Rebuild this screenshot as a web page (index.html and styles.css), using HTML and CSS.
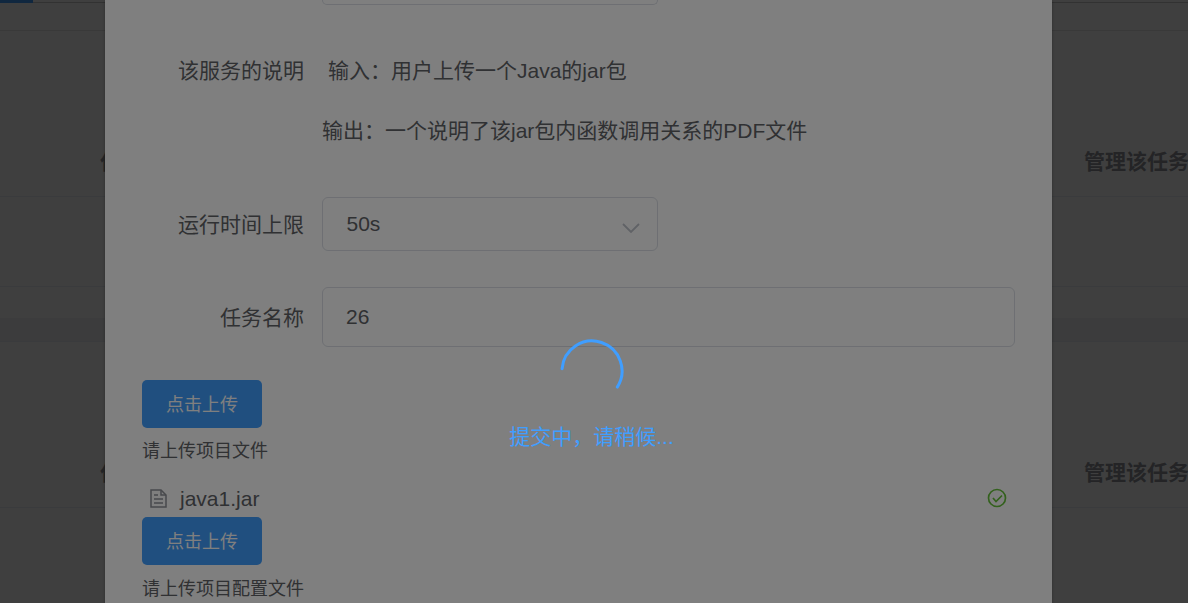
FILE: index.html
```html
<!DOCTYPE html>
<html lang="zh-CN">
<head>
<meta charset="utf-8">
<title>提交任务</title>
<link rel="stylesheet" href="styles.css">
</head>
<body>
<div class="page">
  <div class="topbar"><div class="progress"></div></div>
  <div class="head-row"><span class="head-cell">任务名称</span><span class="head-cell">管理该任务</span></div>
  <div class="body-row"></div>
  <div class="gap"></div>
  <div class="head-row"><span class="head-cell">任务名称</span><span class="head-cell">管理该任务</span></div>
</div>
<div class="modal-mask"></div>
<div class="dialog">
  <div class="stub"></div>
  <div class="form-row desc-row">
    <div class="label">该服务的说明</div>
    <div class="desc">
      <div class="desc-first">输入：用户上传一个Java的jar包</div>
      <div>输出：一个说明了该jar包内函数调用关系的PDF文件</div>
    </div>
  </div>
  <div class="form-row select-row">
    <div class="label">运行时间上限</div>
    <div class="field select">
      <span>50s</span>
      <svg class="arrow" width="18" height="10" viewBox="0 0 18 10"><path d="M1 1l8 8 8-8"/></svg>
    </div>
  </div>
  <div class="form-row input-row">
    <div class="label">任务名称</div>
    <div class="field input"><span>26</span></div>
  </div>
  <div class="btn btn-first">点击上传</div>
  <div class="tip tip-first">请上传项目文件</div>
  <div class="file">
    <svg class="doc" width="17" height="19" viewBox="0 0 17 19"><path d="M1 1h10l5 5v12H1z"/><path d="M11 1v5h5M4 6h4M4 10h9M4 14h9"/></svg>
    <span class="file-name">java1.jar</span>
    <svg class="ok" width="20" height="20" viewBox="0 0 20 20"><circle cx="10" cy="10" r="8.5"/><path d="M6 10l3 3.500 6-6"/></svg>
  </div>
  <div class="btn">点击上传</div>
  <div class="tip tip-second">请上传项目配置文件</div>
</div>
<div class="loading">
  <svg class="spinner" width="66" height="66" viewBox="0 0 66 66"><path d="M3.100 30.700A30 30 0 1 1 58.300 49.100"/></svg>
  <div class="loading-text">提交中，请稍候...</div>
</div>
</body>
</html>
```
FILE: styles.css
```css
* { box-sizing: border-box; }
html, body { margin: 0; height: 100%; }
body {
  position: relative;
  width: 1188px;
  height: 603px;
  overflow: hidden;
  background: #fff;
  font-family: "Liberation Sans", "Noto Sans CJK SC", sans-serif;
  color: #606266;
}
.page { height: 603px; overflow: hidden; }
.topbar {
  height: 31px;
  border-bottom: 1px solid #e6e6e6;
  background: linear-gradient(#fff 2px, #c8c8c8 2px, #c8c8c8 3px, #fff 3px);
}
.topbar .progress { width: 33px; height: 3px; background: #409eff; }
.head-row {
  display: grid;
  grid-template-columns: 984px 1fr;
  align-items: center;
  height: 166px;
  padding: 93px 0 0 100px;
  border-bottom: 1px solid #ebeef5;
  font-size: 21px;
  font-weight: 700;
  color: #909399;
  white-space: nowrap;
}
.body-row { height: 90px; border-bottom: 1px solid #ebeef5; }
.gap { height: 24px; margin-top: 31px; background: #f0f2f5; border-bottom: 1px solid #ebeef5; }
.modal-mask, .loading { position: absolute; inset: 0; background: rgba(0, 0, 0, .5); }
.dialog {
  position: absolute;
  top: 0;
  left: 105px;
  width: 947px;
  height: 603px;
  overflow: hidden;
  padding: 0 37px;
  background: #fff;
  box-shadow: 0 1px 3px rgba(0, 0, 0, .3);
}
.stub {
  width: 336px;
  height: 5px;
  margin-left: 180px;
  border: 1px solid #dcdfe6;
  border-top: 0;
  border-radius: 0 0 6px 6px;
}
.form-row { display: grid; grid-template-columns: 162px 1fr; column-gap: 18px; align-items: center; font-size: 21px; }
.label { text-align: right; }
.desc-row { margin-top: 36px; align-items: start; line-height: 60px; }
.desc-first { padding-left: 6px; }
.field {
  display: flex;
  align-items: center;
  justify-content: space-between;
  border: 1px solid #dcdfe6;
  border-radius: 6px;
  padding: 0 17px 0 23px;
}
.select-row { margin-top: 36px; }
.select-row .label { padding-bottom: 3px; }
.select { width: 336px; height: 54px; padding-left: 23.500px; }
.input-row { margin-top: 36px; }
.input-row .label { padding-bottom: 3px; }
.input { width: 693px; height: 60px; padding-bottom: 1px; }
.arrow { margin-top: 8px; }
.arrow path { fill: none; stroke: #c0c4cc; stroke-width: 1.800; }
.btn {
  width: 120px;
  height: 48px;
  border-radius: 5px;
  background: #409eff;
  color: #fff;
  font-size: 18px;
  line-height: 50px;
  text-align: center;
}
.btn-first { margin-top: 33px; }
.tip { font-size: 18px; line-height: 27px; }
.tip-first { margin-top: 10px; }
.tip-second { margin-top: 11px; }
.file {
  display: flex;
  align-items: center;
  height: 38px;
  margin-top: 14px;
  padding: 0 8px;
  font-size: 21px;
}
.doc { flex: none; }
.doc path { fill: none; stroke: #909399; stroke-width: 1.500; }
.file-name { margin: 2px 0 0 13px; }
.ok { margin-left: auto; }
.ok circle, .ok path { fill: none; stroke: #67c23a; stroke-width: 1.700; }
.loading { display: flex; flex-direction: column; align-items: center; padding: 338px 5px 0 0; color: #409eff; }
.spinner path { fill: none; stroke: #409eff; stroke-width: 3; stroke-linecap: round; }
.loading-text { margin-top: 19px; font-size: 21px; line-height: 27px; }
```
